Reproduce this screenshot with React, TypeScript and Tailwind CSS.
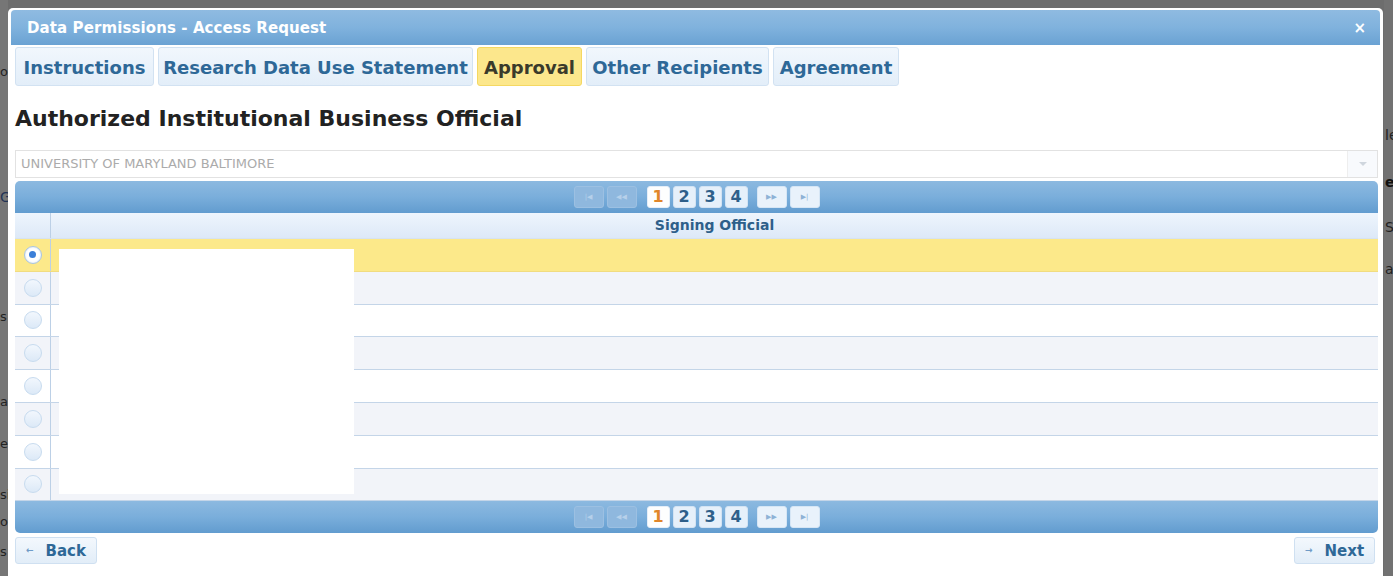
import React from "react";

const font = { fontFamily: '"DejaVu Sans", Verdana, sans-serif' };

function PagerBtn({ children, kind }: { children: React.ReactNode; kind: "dis" | "nav" | "num" | "cur" }) {
  const base = "h-[22px] flex items-center justify-center rounded-[3px] border";
  if (kind === "dis")
    return <div className={`${base} w-[30px] bg-[#8fb8de] border-[#9cc0e2] text-[#b6d0ea] text-[7px]`}>{children}</div>;
  if (kind === "nav")
    return <div className={`${base} w-[30px] bg-[#e9f2fb] border-[#d6e6f5] text-[#8eb2d6] text-[7px]`}>{children}</div>;
  if (kind === "cur")
    return <div className={`${base} w-[23px] bg-[#fdfefe] border-[#e5eef8] text-[#e0862a] text-[16px] font-bold`}>{children}</div>;
  return <div className={`${base} w-[23px] bg-[#e6f0fa] border-[#d3e3f3] text-[#2e5f8a] text-[16px] font-bold`}>{children}</div>;
}

function Pager({ rounded }: { rounded: "top" | "bottom" }) {
  return (
    <div
      className={`h-[32px] flex items-center justify-center bg-gradient-to-b from-[#8cb9e0] via-[#7aaedb] to-[#629ccf] ${rounded === "top" ? "rounded-t-[5px]" : "rounded-b-[5px]"}`}
    >
      <div className="flex items-center">
        <PagerBtn kind="dis">|◀</PagerBtn>
        <div className="w-[3px]" />
        <PagerBtn kind="dis">◀◀</PagerBtn>
        <div className="w-[10px]" />
        <PagerBtn kind="cur">1</PagerBtn>
        <div className="w-[3px]" />
        <PagerBtn kind="num">2</PagerBtn>
        <div className="w-[3px]" />
        <PagerBtn kind="num">3</PagerBtn>
        <div className="w-[3px]" />
        <PagerBtn kind="num">4</PagerBtn>
        <div className="w-[9px]" />
        <PagerBtn kind="nav">▶▶</PagerBtn>
        <div className="w-[3px]" />
        <PagerBtn kind="nav">▶|</PagerBtn>
      </div>
    </div>
  );
}

function Radio({ checked }: { checked?: boolean }) {
  if (checked)
    return (
      <div className="w-[18px] h-[18px] rounded-full border border-[#a9c4e0] bg-white flex items-center justify-center shadow-[inset_0_0_2px_#c9dcef]">
        <div className="w-[7px] h-[7px] rounded-full bg-[#3b7fd8]" />
      </div>
    );
  return <div className="w-[18px] h-[18px] rounded-full border border-[#c7dbef] bg-gradient-to-b from-[#f2f7fd] to-[#dce9f7]" />;
}

const tabs = [
  { label: "Instructions", w: "w-[139px]" },
  { label: "Research Data Use Statement", w: "w-[315px]" },
  { label: "Approval", w: "w-[105px]", active: true },
  { label: "Other Recipients", w: "w-[183px]" },
  { label: "Agreement", w: "w-[126px]" },
];

export default function App() {
  const rows = [0, 1, 2, 3, 4, 5, 6, 7];
  return (
    <div className="w-[1393px] h-[576px] overflow-hidden bg-[#6d6d6d] relative" style={font}>
      {/* background page fragments */}
      <div className="absolute left-0 top-0 w-[8px] h-[576px] bg-[#767676]" />
      <div className="absolute left-[1384px] top-0 w-[9px] h-[576px] bg-[#727272]" />
      <div className="absolute left-[1385px] top-[128px] text-[14px] text-[#222] leading-none">le</div>
      <div className="absolute left-[1385px] top-[175px] text-[14px] text-[#111] font-bold leading-none">er</div>
      <div className="absolute left-[1385px] top-[220px] text-[14px] text-[#222] leading-none">S</div>
      <div className="absolute left-[1385px] top-[262px] text-[14px] text-[#222] leading-none">a</div>
      <div className="absolute left-0 top-[65px] text-[13px] text-[#222] leading-none">o</div>
      <div className="absolute left-0 top-[190px] text-[14px] text-[#235] leading-none">G</div>
      <div className="absolute left-0 top-[310px] text-[13px] text-[#222] leading-none">s</div>
      <div className="absolute left-0 top-[395px] text-[13px] text-[#222] leading-none">a</div>
      <div className="absolute left-0 top-[437px] text-[13px] text-[#222] leading-none">e</div>
      <div className="absolute left-0 top-[488px] text-[13px] text-[#222] leading-none">si</div>
      <div className="absolute left-0 top-[515px] text-[13px] text-[#222] leading-none">o</div>
      <div className="absolute left-0 top-[545px] text-[13px] text-[#222] leading-none">s</div>

      <div className="absolute left-[8px] top-[8px] w-[1375px] h-[580px] bg-white rounded-t-[5px] p-[3px] pt-[2px]">
        {/* title bar */}
        <div className="h-[35px] rounded-t-[4px] bg-gradient-to-b from-[#8fbbe1] via-[#80b2dd] to-[#6aa2d3] flex items-center justify-between pl-[16px] pr-[14px] pt-[2px]">
          <span className="text-white font-bold text-[15px] tracking-[0.1px]">Data Permissions - Access Request</span>
          <span className="text-white font-bold text-[15px] leading-none">×</span>
        </div>

        <div className="pl-[4px] pr-[2px]">
          {/* tabs */}
          <div className="flex gap-[4px] mt-[2px]">
            {tabs.map((t) => (
              <div
                key={t.label}
                className={`${t.w} h-[39px] flex items-center justify-center rounded-[3px] border text-[18px] font-bold whitespace-nowrap pt-[1px] ${
                  t.active
                    ? "bg-[#fce78c] border-[#f5d862] text-[#3a3a2a]"
                    : "bg-gradient-to-b from-[#f1f7fd] to-[#e3eef9] border-[#d2e2f2] text-[#2e6897]"
                }`}
              >
                {t.label}
              </div>
            ))}
          </div>

          {/* heading */}
          <div className="mt-[19px] text-[22px] font-bold text-[#222] leading-[28px]">Authorized Institutional Business Official</div>

          {/* select */}
          <div className="mt-[17px] h-[28px] flex border border-[#e2e2e2] bg-white">
            <div className="flex-1 flex items-center pl-[5px] text-[13px] text-[#ababab]">UNIVERSITY OF MARYLAND BALTIMORE</div>
            <div className="w-[30px] border-l border-[#eeeeee] bg-[#f8fafd] flex items-center justify-center">
              <div className="w-0 h-0 border-l-[4px] border-r-[4px] border-t-[4px] border-l-transparent border-r-transparent border-t-[#cfd6de]" />
            </div>
          </div>

          {/* grid */}
          <div className="mt-[3px] relative">
            <Pager rounded="top" />
            <div className="flex h-[26px] bg-gradient-to-b from-[#eef5fd] to-[#dde9f7] border-b border-[#d7e3f0]">
              <div className="w-[36px] border-r border-[#bcd0e6]" />
              <div className="flex-1 flex items-center justify-center text-[14px] font-bold text-[#2e5f8a]">Signing Official</div>
            </div>
            {rows.map((i) => (
              <div
                key={i}
                className={`flex h-[32.8px] border-b ${
                  i === 0 ? "bg-[#fce98a] border-[#f1dc80]" : i % 2 === 1 ? "bg-[#f2f4f9] border-[#c4d5e8]" : "bg-white border-[#c4d5e8]"
                }`}
              >
                <div className="w-[36px] border-r border-[#bcd0e6] flex items-center justify-center">
                  <Radio checked={i === 0} />
                </div>
                <div className="flex-1" />
              </div>
            ))}
            <Pager rounded="bottom" />
            {/* redaction box */}
            <div className="absolute left-[44px] top-[68px] w-[295px] h-[245px] bg-white" />
          </div>

          {/* footer */}
          <div className="mt-[4px] flex justify-between">
            <div className="w-[82px] h-[27px] rounded-[3px] border border-[#cfe0f1] bg-gradient-to-b from-[#f3f8fd] to-[#e2edf8] flex items-center pl-[10px] gap-[12px] text-[#2e6897] font-bold text-[15px]">
              <span className="text-[9px] text-[#6f9bc7]">←</span>
              <span>Back</span>
            </div>
            <div className="w-[81px] h-[27px] mr-[3px] rounded-[3px] border border-[#cfe0f1] bg-gradient-to-b from-[#f3f8fd] to-[#e2edf8] flex items-center pl-[10px] gap-[12px] text-[#2e6897] font-bold text-[15px]">
              <span className="text-[9px] text-[#6f9bc7]">→</span>
              <span>Next</span>
            </div>
          </div>
        </div>
      </div>
    </div>
  );
}
